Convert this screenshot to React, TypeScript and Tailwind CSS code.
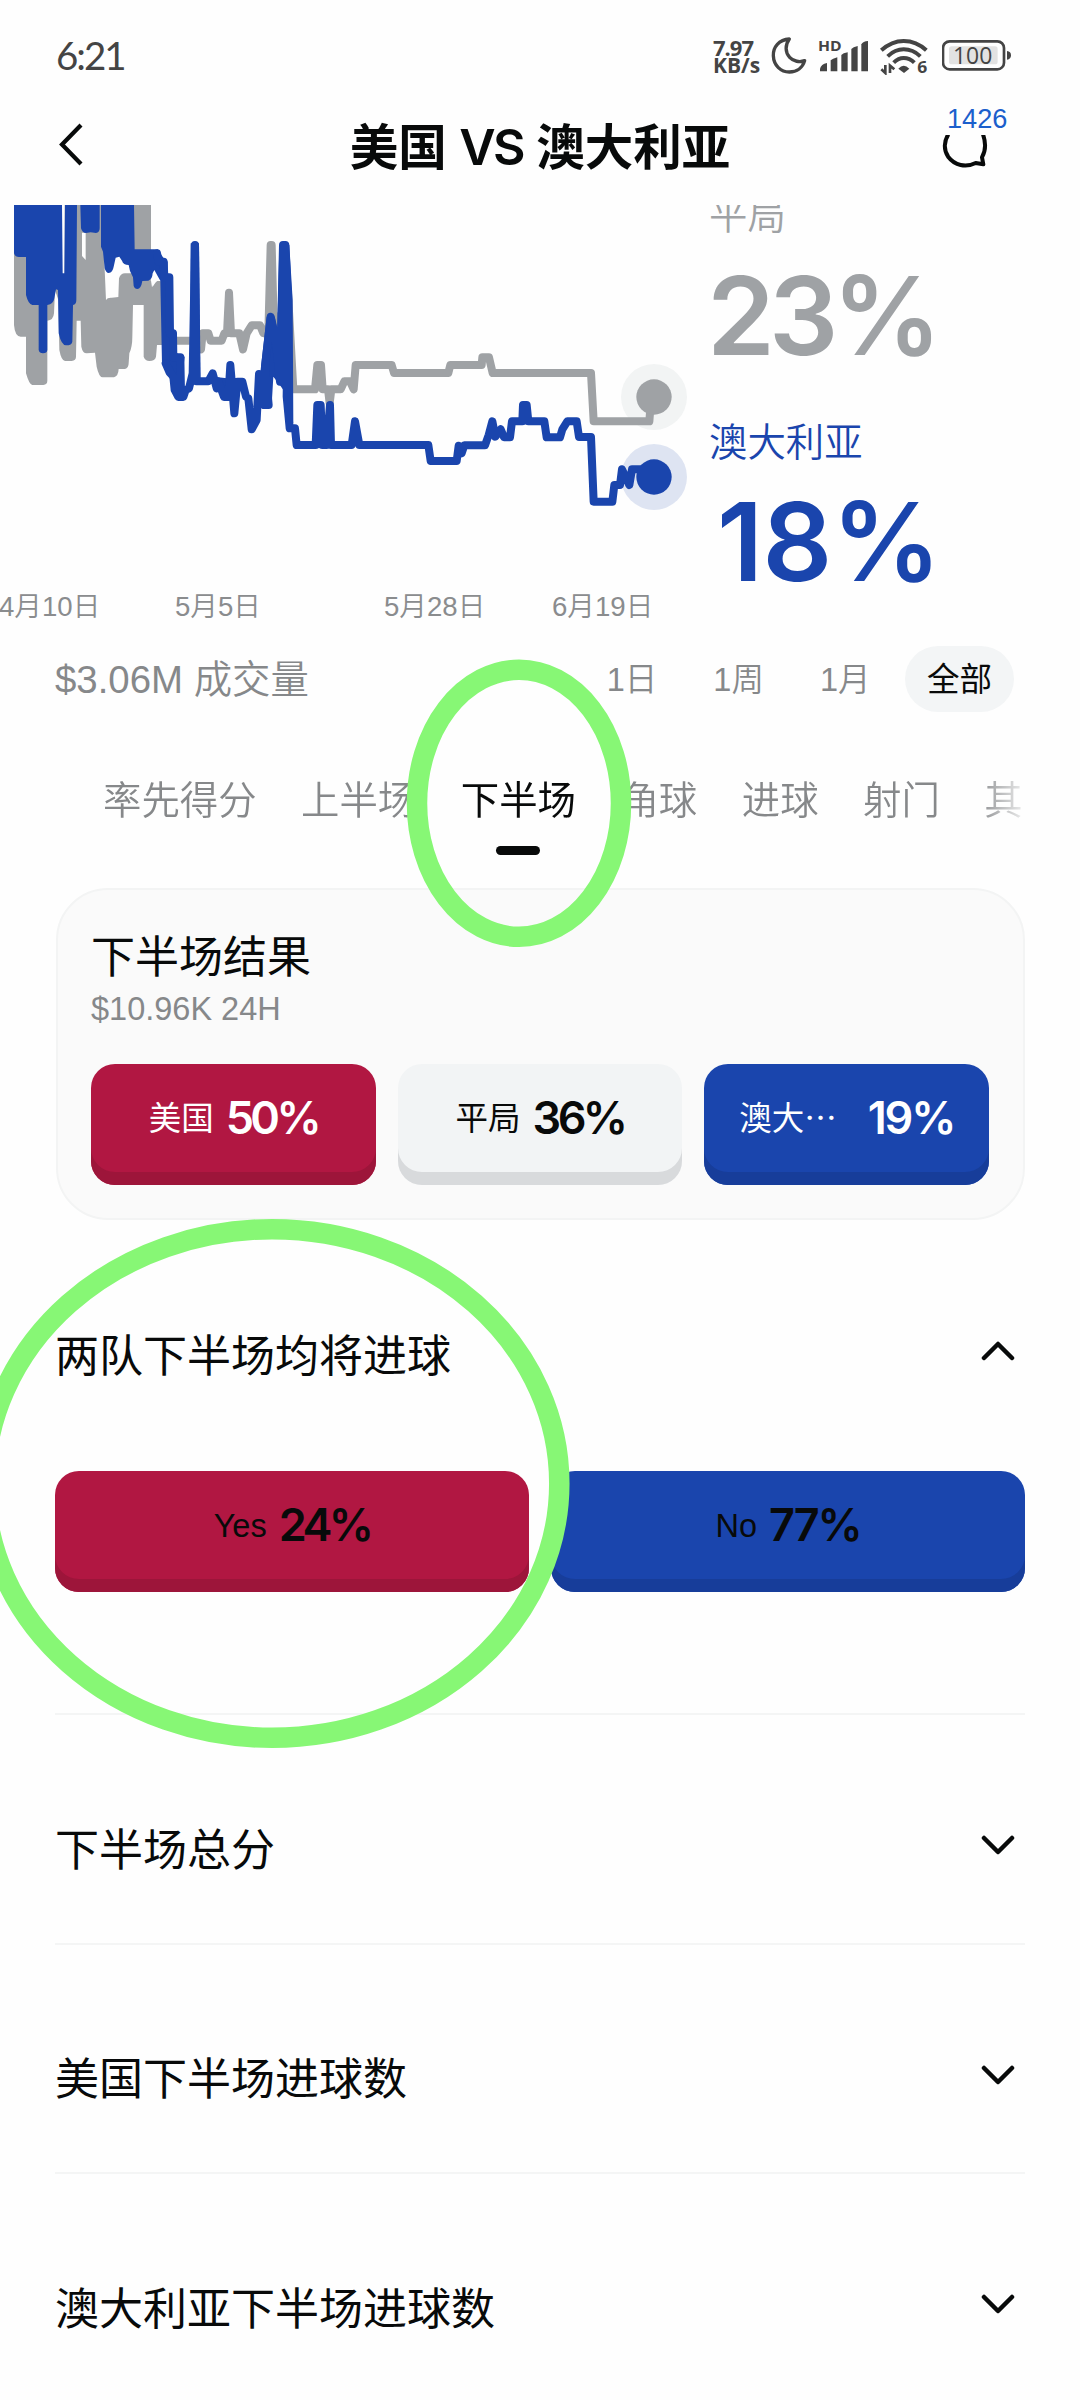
import React from "react";

const GREEN = "#87f775";
const BLUE = "#1a45ad";
const GRAY = "#9fa2a5";

function StatusBar() {
  return (
    <div className="flex h-[112px] shrink-0 items-center justify-between pl-[56px] pr-[68px] text-[#444]">
      <span className="mt-[-3px] font-[Lato] text-[38.5px] leading-[44px] tracking-[-2px]">6:21</span>
      <div className="flex items-center">
        <div className="w-[58px] font-['Open_Sans'] font-bold leading-[18px]">
          <div className="text-[22px] tracking-[-1px]">7.97</div>
          <div className="text-[21px]">KB/s</div>
        </div>
        {/* do-not-disturb moon */}
        <svg className="h-[38px] w-[36px]" viewBox="216 50 108 114" fill="none">
          <path
            d="M271 56 C240 58 222 80 223 106 C224 136 246 155 271 155 C294 155 311 142 317 121 C302 127 283 123 272 111 C258 96 258 74 271 56 Z"
            stroke="#444"
            strokeWidth="10"
            strokeLinejoin="round"
          />
        </svg>
        {/* signal strength */}
        <svg className="ml-[9px] h-[38px] w-[54px]" viewBox="351 50 162 114" fill="#444">
          <text x="357" y="93" fontSize="44" fontWeight="700" fontFamily="Open Sans" textLength="71" lengthAdjust="spacingAndGlyphs">
            HD
          </text>
          <path d="M363 153V145Q366 132 384 128V153Z" />
          <path d="M395 153V120Q400 116 415 111V153Z" />
          <path d="M427 153V104Q432 98 446 96V153Z" />
          <path d="M457 153V86Q462 80 476 77V153Z" />
          <path d="M487 153V72Q492 63 507 62V153Z" />
        </svg>
        {/* wi-fi */}
        <svg className="ml-[8px] h-[38px] w-[50px]" viewBox="537 50 150 114" fill="none">
          <path d="M547 90Q578 62 614 62Q652 62 682 90" stroke="#444" strokeWidth="12" />
          <path d="M566 108Q588 87 614 87Q642 87 664 108" stroke="#444" strokeWidth="12" />
          <path d="M584 127Q598 113 614 113Q632 113 646 127" stroke="#444" strokeWidth="12" />
          <path d="M598 145Q614 127 631 145L615 158Z" fill="#444" />
          <path d="M559 134V158L547 147M573 158V136L586 147" stroke="#444" strokeWidth="8" />
          <text x="655" y="158" fontSize="46" fontWeight="700" fill="#444" fontFamily="Open Sans" textLength="30" lengthAdjust="spacingAndGlyphs">
            6
          </text>
        </svg>
        {/* battery */}
        <svg className="ml-[14px] h-[38px] w-[70px]" viewBox="729 50 210 114" fill="none">
          <rect x="732" y="63" width="183" height="84" rx="20" stroke="#444" strokeWidth="8" />
          <rect x="750" y="78" width="146" height="54" rx="8" fill="#e2e2e2" />
          <path d="M924 92Q936 93 936 105Q936 117 924 118Z" fill="#444" />
          <text x="762" y="132" fontSize="71" fill="#444" fontFamily="Open Sans" textLength="118" lengthAdjust="spacingAndGlyphs">
            100
          </text>
        </svg>
      </div>
    </div>
  );
}

function Header() {
  return (
    <header className="relative mb-[21px] flex h-[72px] shrink-0 items-center justify-center">
      <svg className="absolute left-[56px] top-[10px] h-[46px] w-[30px]" viewBox="0 0 30 46" fill="none">
        <path d="M25 3L6 22.5L25 42" stroke="#080a0a" strokeWidth="4.2" />
      </svg>
      <h1 className="mt-[-2px] whitespace-nowrap text-[48.5px] font-semibold leading-[60px] text-[#080a0a]">
        美国 <span className="ml-[-1px] font-[Inter] text-[50px] tracking-[-2.6px]">VS</span> 澳大利亚
      </h1>
      <div className="absolute left-[940px] top-[-8px] flex flex-col items-start">
        <span className="ml-[7px] text-[27.2px] leading-[30px] text-[#1b5fcc]">1426</span>
        <svg className="mt-[1px] h-[35px] w-[54px]" viewBox="720 347 162 105" fill="none">
          <path
            d="M745 345C732 365 730 392 745 413C764 438 797 446 827 431L850 435L846 414C858 393 856 365 849 345"
            stroke="#080a0a"
            strokeWidth="12"
            strokeLinejoin="round"
          />
        </svg>
      </div>
    </header>
  );
}

function PriceChart() {
  return (
    <svg className="h-[385px] w-[709px] shrink-0" viewBox="0 45 2127 1155" fill="none">
      <circle cx="1962" cy="621" r="99" fill="#f2f4f4" />
      {/* draw */}
      <path
        fill={GRAY}
        d="M42 45V405Q45 440 62 440H78V550Q88 585 97 585H130Q142 583 142 572V392Q160 392 162 370L165 300L175 330L178 480Q184 512 195 513H215Q228 511 228 500L230 392H242L244 470Q248 490 260 490L285 488L290 530Q297 562 308 562H342Q355 558 356 537H375Q386 534 386 520L388 490Q397 470 397 440L399 345H431V500Q436 513 448 513Q465 513 468 500L471 465H500V275L470 272L458 290L453 200V45Z"
      />
      <path fill="#fefefe" d="M186 45H194V255H186Z" />
      <path fill="#fefefe" d="M246 128H257V210L246 198Z" />
      <path fill="#fefefe" d="M313 215L318 330Q322 322 335 323L355 321L357 265Q362 250 375 250L396 250L392 190H330Z" />
      <path fill="#fefefe" d="M425 272H452L458 240H480V270Q463 274 456 292L453 272Z" />
      <g stroke={GRAY} strokeWidth="24" strokeLinejoin="round" strokeLinecap="round">
        <path d="M480 452H575L603 478L608 430H625L632 452H665L673 430H681L687 308L693 430H718L729 478L740 430L755 406H780L790 430H805L812 165L815 165L822 430L860 330L864 310L880 598H945L952 525H963L968 598H984L989 640L994 598H1022L1033 574H1050L1061 598L1067 525H1175L1182 549H1345L1351 525H1445L1447 502H1467L1478 549H1773L1781 694H1948L1951 655" />
      </g>
      <circle cx="1962" cy="861" r="99" fill="#1a45ad" fillOpacity="0.14" />
      {/* away team */}
      <path
        fill={BLUE}
        d="M42 45V190Q45 201 57 201H78V315Q85 343 97 345H116V480Q118 490 129 490Q141 490 142 480V345Q160 343 163 325L168 298L174 300L176 430Q184 466 198 466Q216 466 217 455L219 345Q229 343 229 330L231 45H195L193 250H188L186 45Z"
      />
      <path fill={BLUE} d="M241 45L243 115Q247 129 258 129L272 127L288 129Q299 127 299 115V45Z" />
      <path
        fill={BLUE}
        d="M303 45V170L309 185L314 235Q318 249 326 249Q338 247 341 230L347 203L358 200L366 212Q370 225 386 225L390 243L399 262L401 288Q404 297 412 297Q423 297 427 273L445 272Q457 268 458 250L463 240L475 262L481 272L486 520L500 540L540 620L554 500L531 490V430L519 415V262L503 250V215L490 203L473 178H404L402 45Z"
      />
      <path fill={BLUE} d="M800 380H824L832 420L838 165H868L878 330L880 700H860L850 600L838 583L820 560L815 645H790L775 600Z" />
      <path fill={BLUE} d="M572 160H597L602 580H570Z" />
      <path fill={BLUE} d="M640 560L680 620H700L730 570Z" />
      <g stroke={BLUE} strokeWidth="24" strokeLinejoin="round" strokeLinecap="round">
        <path d="M471 190L476 215H491L493 262H508L510 430H519L520 502H541L543 605L497 520L509 548L520 560L524 600L535 621H550L557 600L567 595L578 550L585 165L589 574H625L638 550L650 595L655 574L672 621H685L691 525L703 670L712 575H727L738 620L745 625L755 718L770 690L777 552L792 645H806L795 530L812 380L826 440L840 575L849 165H856L864 330L860 620L869 715H885L890 765H947L952 645H962L967 765H980L990 645L993 765H1055L1065 694L1078 765H1285L1292 813H1370L1376 767L1385 790L1393 766H1455L1466 735L1477 694L1486 740L1502 718L1512 742H1530L1536 694H1567L1569 645H1580L1585 694H1633L1640 742H1680L1687 718L1702 694H1730L1737 741H1773L1781 935H1837L1843 885H1860L1866 838L1888 885L1896 838H1930" />
      </g>
      <circle cx="1962" cy="621" r="53" fill={GRAY} />
      <circle cx="1962" cy="861" r="53" fill={BLUE} />
    </svg>
  );
}

function ChartSection() {
  return (
    <section className="flex h-[385px] shrink-0 overflow-hidden">
      <PriceChart />
      <div className="mt-[-11px] flex flex-col">
        <span className="h-[44px] shrink-0 text-[38.4px] font-[350] leading-[44px] text-[#9fa2a5]">平局</span>
        <span className="ml-[-2px] h-[182px] shrink-0 pt-[14px] font-[Inter] text-[109px] font-semibold leading-[126px] tracking-[-6px] text-[#9fa2a5]">
          23%
        </span>
        <span className="h-[44px] shrink-0 pt-px text-[38.4px] font-[350] leading-[44px] text-[#1a45ad]">澳大利亚</span>
        <span className="h-[182px] shrink-0 pl-[8px] pt-[14px] font-[Inter] text-[109px] font-semibold leading-[126px] tracking-[-0.5px] text-[#1a45ad]">
          18%
        </span>
      </div>
    </section>
  );
}

function AxisLabels() {
  return (
    <div className="-ml-px grid h-[32px] shrink-0 grid-cols-[176px_209px_168px_1fr] pt-px text-[27.6px] font-[350] leading-[32px] text-[#8a8c8e]">
      <span>4月10日</span>
      <span>5月5日</span>
      <span>5月28日</span>
      <span>6月19日</span>
    </div>
  );
}

function PeriodRow() {
  return (
    <div className="mt-[24px] flex h-[66px] shrink-0 items-center justify-between pl-[55px] pr-[66px] text-[#86888a]">
      <span className="pt-[2px] text-[38.4px] font-[350] leading-[48px]">$3.06M 成交量</span>
      <div className="flex items-center gap-[13px] text-[32.5px]">
        {["1日", "1周", "1月"].map((t) => (
          <span key={t} className="px-[21.5px] pt-[3px] font-[350] leading-[63px]">
            {t}
          </span>
        ))}
        <span className="flex h-[66px] items-center rounded-[33px] bg-[#f3f5f6] px-[22px] pt-[3px] text-[#080a0a]">全部</span>
      </div>
    </div>
  );
}

function Tabs() {
  const tabs = ["率先得分", "上半场", "下半场", "角球", "进球", "射门", "其他"];
  return (
    <nav className="ml-[56px] mt-[64px] flex h-[79px] w-[965px] shrink-0 gap-[44.5px] overflow-hidden pl-[47px] text-[38.4px] leading-[50px] [mask-image:linear-gradient(to_right,#000_920px,transparent_976px)]">
      {tabs.map((t) => {
        const active = t === "下半场";
        return (
          <div key={t} className={active ? "flex shrink-0 flex-col items-center text-[#080a0a]" : "shrink-0 font-[350] text-[#86888a]"}>
            <span className="whitespace-nowrap">{t}</span>
            {active && <span className="mt-[20px] h-[9px] w-[44px] rounded-full bg-[#080a0a]" />}
          </div>
        );
      })}
    </nav>
  );
}

type Tone = "red" | "gray" | "blue";
const tones: Record<Tone, string> = {
  red: "bg-[#b11742] shadow-[inset_0_-13px_0_#9d153a]",
  gray: "bg-[#f2f4f5] shadow-[inset_0_-13px_0_#d8dadc]",
  blue: "bg-[#1a45ad] shadow-[inset_0_-13px_0_#173d9a]",
};

function OutcomeButton({ tone, label, pct, text, wide }: { tone: Tone; label: string; pct: string; text: string; wide?: boolean }) {
  return (
    <button className={`flex h-[120.5px] flex-1 items-center justify-center rounded-[24px] pb-[13px] ${wide ? "gap-[31px]" : "gap-[12px]"} ${tones[tone]} ${text}`}>
      <span className="pt-[2px] text-[32.5px] leading-[48px]">{label}</span>
      <span className={`font-[Inter] text-[45px] font-semibold leading-[48px] ${tone === "blue" ? "tracking-[-2.2px]" : "tracking-[-3.6px]"}`}>{pct}</span>
    </button>
  );
}

function ResultCard() {
  return (
    <section className="ml-[56px] mt-[33px] h-[332px] w-[969px] shrink-0 rounded-[52px] border-2 border-[#f3f4f4] bg-[#fafafa] pl-[33px] pr-[34px] pt-[42px]">
      <h2 className="text-[44px] leading-[52px] text-[#080a0a]">下半场结果</h2>
      <p className="mt-[7px] text-[32.5px] leading-[36px] text-[#86888a]">$10.96K 24H</p>
      <div className="mt-[37px] flex gap-[22px]">
        <OutcomeButton tone="red" label="美国" pct="50%" text="text-white" />
        <OutcomeButton tone="gray" label="平局" pct="36%" text="text-[#080a0a]" />
        <OutcomeButton tone="blue" label="澳大⋯" pct="19%" text="text-white" wide />
      </div>
    </section>
  );
}

function Chevron({ up }: { up?: boolean }) {
  return (
    <svg className="mb-[10px] h-[20px] w-[34px]" viewBox="0 0 34 20" fill="none">
      <path
        d={up ? "M3 17L17 3L31 17" : "M3 3L17 17L31 3"}
        stroke="#080a0a"
        strokeWidth="4.5"
        strokeLinecap="round"
        strokeLinejoin="round"
      />
    </svg>
  );
}

function RowTitle({ title, up }: { title: string; up?: boolean }) {
  return (
    <div className="flex h-[56px] items-center justify-between pr-[10px]">
      <h2 className="pt-px text-[44px] leading-[56px] text-[#080a0a]">{title}</h2>
      <Chevron up={up} />
    </div>
  );
}

function Annotations() {
  return (
    <svg className="pointer-events-none absolute left-0 top-0 h-[2400px] w-[1080px]" viewBox="0 0 1080 2400" fill="none" stroke={GREEN} strokeWidth="20.5">
      <ellipse cx="519" cy="803.3" rx="102" ry="133.5" />
      <ellipse cx="272" cy="1483.5" rx="287.3" ry="254.3" />
    </svg>
  );
}

export default function App() {
  return (
    <div lang="zh-CN" className="relative flex h-[2400px] w-[1080px] flex-col overflow-hidden bg-[#fefefe] font-['Liberation_Sans','Noto_Sans_CJK_SC',sans-serif]">
      <StatusBar />
      <Header />
      <ChartSection />
      <AxisLabels />
      <PeriodRow />
      <Tabs />
      <ResultCard />
      <section className="ml-[55px] mt-[108px] h-[387px] w-[970px] shrink-0 border-b-2 border-[#f4f5f5]">
        <RowTitle title="两队下半场均将进球" up />
        <div className="mt-[87px] flex gap-[22px]">
          <OutcomeButton tone="red" label="Yes" pct="24%" text="text-[#080a0a]" />
          <OutcomeButton tone="blue" label="No" pct="77%" text="text-[#080a0a]" />
        </div>
      </section>
      {["下半场总分", "美国下半场进球数", "澳大利亚下半场进球数"].map((t) => (
        <section key={t} className="ml-[55px] h-[229.5px] w-[970px] shrink-0 border-b-2 border-[#f4f5f5] pt-[107px]">
          <RowTitle title={t} />
        </section>
      ))}
      <Annotations />
    </div>
  );
}
